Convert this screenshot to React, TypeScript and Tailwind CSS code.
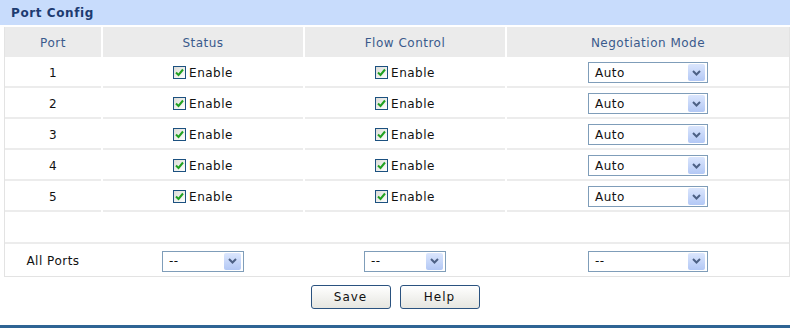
const font = { fontFamily: "Tahoma, 'DejaVu Sans', Verdana, sans-serif" }

function Check() {
  return (
    <span className="inline-flex h-[13px] w-[13px] items-center justify-center border border-[#1c5180] bg-gradient-to-br from-[#dcdcd7] to-white">
      <svg width="9" height="9" viewBox="0 0 9 9">
        <path d="M1 4.5 L3.5 7 L8 1.5" fill="none" stroke="#21a121" strokeWidth="2" />
      </svg>
    </span>
  )
}

function Enable() {
  return (
    <div className="flex items-center justify-center gap-[3px]">
      <Check />
      <span>Enable</span>
    </div>
  )
}

function Select({ value, width }: { value: string; width: string }) {
  return (
    <div className={`flex h-[21px] items-center justify-between border border-[#7f9db9] bg-white pl-[6px] pr-[2px] ${width}`}>
      <span className="leading-none">{value}</span>
      <span className="flex h-[17px] w-[17px] items-center justify-center rounded-[2px] bg-gradient-to-b from-[#dbe6fd] to-[#b3c8f5]">
        <svg width="9" height="6" viewBox="0 0 9 6">
          <path d="M1 1 L4.5 4.5 L8 1" fill="none" stroke="#4d6185" strokeWidth="2" />
        </svg>
      </span>
    </div>
  )
}

const ports = [1, 2, 3, 4, 5]

export default function App() {
  return (
    <div className="h-[333px] w-[794px] bg-white text-[12px] tracking-[0.5px] text-[#111]" style={font}>
      <div className="flex h-[25px] w-[790px] items-center bg-[#c8dcfc] pl-[11px] font-bold tracking-[0.6px] text-[#1d3b70]">
        Port Config
      </div>
      <div className="ml-[4px] mt-[2px] w-[786px] border-x border-b border-[#e3e3e3]">
        <div className="grid grid-cols-[96px_200px_200px_1fr] gap-x-[2px] text-[#3a5a8c]">
          <div className="flex h-[30px] items-center justify-center bg-[#ebebeb] pt-[2px]">Port</div>
          <div className="flex h-[30px] items-center justify-center bg-[#ebebeb] pt-[2px]">Status</div>
          <div className="flex h-[30px] items-center justify-center bg-[#ebebeb] pt-[2px]">Flow Control</div>
          <div className="flex h-[30px] items-center justify-center bg-[#ebebeb] pt-[2px]">Negotiation Mode</div>
        </div>
        {ports.map((p) => (
          <div key={p} className="mt-[2px] grid grid-cols-[96px_200px_200px_1fr] gap-x-[2px]">
            <div className="flex h-[29px] items-center justify-center border-b-2 border-[#ececec]">{p}</div>
            <div className="flex h-[29px] items-center justify-center border-b-2 border-[#ececec]">
              <Enable />
            </div>
            <div className="flex h-[29px] items-center justify-center border-b-2 border-[#ececec]">
              <Enable />
            </div>
            <div className="flex h-[29px] items-center justify-center border-b-2 border-[#ececec]">
              <Select value="Auto" width="w-[120px]" />
            </div>
          </div>
        ))}
        <div className="mt-[2px] h-[30px] border-b-2 border-[#ececec]" />
        <div className="mt-[2px] grid h-[30px] grid-cols-[96px_200px_200px_1fr] gap-x-[2px]">
          <div className="flex items-center justify-center">All Ports</div>
          <div className="flex items-center justify-center">
            <Select value="--" width="w-[82px]" />
          </div>
          <div className="flex items-center justify-center">
            <Select value="--" width="w-[82px]" />
          </div>
          <div className="flex items-center justify-center">
            <Select value="--" width="w-[120px]" />
          </div>
        </div>
      </div>
      <div className="flex w-[790px] justify-center gap-[9px] pt-[8px]">
        <button className="h-[24px] w-[80px] rounded-[3px] border border-[#2a527f] bg-gradient-to-b from-white to-[#e6e6e0] tracking-[1px] text-[#111]">
          Save
        </button>
        <button className="h-[24px] w-[80px] rounded-[3px] border border-[#2a527f] bg-gradient-to-b from-white to-[#e6e6e0] tracking-[1px] text-[#111]">
          Help
        </button>
      </div>
      <div className="mt-[16px] h-[3px] w-[790px] bg-[#2e6494]" />
    </div>
  )
}
